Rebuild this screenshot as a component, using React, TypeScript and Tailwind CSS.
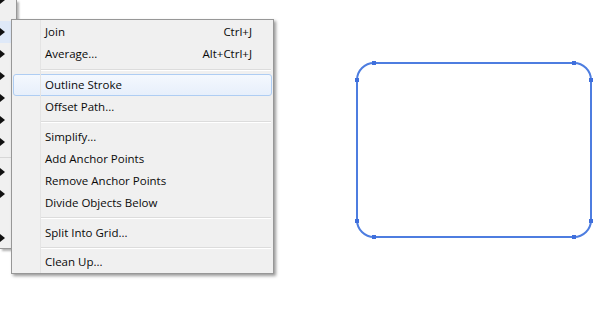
type Item = { label: string; shortcut?: string; active?: boolean };

const groups: { items: Item[]; gap: string }[] = [
  { items: [{ label: "Join", shortcut: "Ctrl+J" }, { label: "Average...", shortcut: "Alt+Ctrl+J" }], gap: "h-[9px]" },
  { items: [{ label: "Outline Stroke", active: true }, { label: "Offset Path..." }], gap: "h-[8px]" },
  {
    items: [
      { label: "Simplify..." },
      { label: "Add Anchor Points" },
      { label: "Remove Anchor Points" },
      { label: "Divide Objects Below" },
    ],
    gap: "h-[8px]",
  },
  { items: [{ label: "Split Into Grid..." }], gap: "h-[7px]" },
  { items: [{ label: "Clean Up..." }], gap: "" },
];

// parent menu rows: true = has submenu arrow, "sep" = separator
const parentRows: (boolean | "sep")[] = [true, true, true, true, true, true, "sep", true, true, false, true];

function Arrow() {
  return (
    <svg width="6" height="8" viewBox="0 0 6 8">
      <polygon points="0,0 5,4 0,8" fill="#111" />
    </svg>
  );
}

function ParentMenu() {
  return (
    <div className="flex h-[249px] w-[17px] flex-col border-r border-b border-[#979797] bg-[#f0f0f0] shadow-[2px_2px_2px_rgba(0,0,0,0.3)]">
      {/* row cut off by the top of the window */}
      <div className="-mt-[4px] h-[25px] shrink-0">
        <Arrow />
      </div>
      {parentRows.map((r, i) =>
        r === "sep" ? (
          <div key={i} className="flex h-[8px] shrink-0 items-center pr-[3px]">
            <div className="h-px w-full bg-[#d7d7d7]" />
          </div>
        ) : (
          <div
            key={i}
            className={i === 0 ? "flex h-[22px] shrink-0 items-center bg-[#dfe9f8]" : "flex h-[22px] shrink-0 items-center"}
          >
            {r && <Arrow />}
          </div>
        )
      )}
    </div>
  );
}

function MenuRow({ item }: { item: Item }) {
  return (
    <div
      className={
        item.active
          ? "mx-px flex h-[22px] items-center justify-between rounded-[3px] border border-[#aecdf3] bg-gradient-to-b from-[#f4f8fe] to-[#e7effb] pl-[31px] pr-[19px]"
          : "mx-px flex h-[22px] items-center justify-between border border-transparent pl-[31px] pr-[19px]"
      }
    >
      <span>{item.label}</span>
      {item.shortcut && <span>{item.shortcut}</span>}
    </div>
  );
}

function Separator({ gap }: { gap: string }) {
  return (
    <div className={`flex flex-col justify-center pl-[28px] pr-[2px] ${gap}`}>
      <div className="h-px bg-[#dcdcdc]" />
      <div className="h-px bg-white" />
    </div>
  );
}

function SubMenu() {
  return (
    <div className="absolute left-[11px] top-[19px] w-[263px] border border-[#979797] bg-[#f0f0f0] pt-px text-[11.5px] text-[#0a0a0a] shadow-[2px_2px_3px_rgba(0,0,0,0.4)]">
      <div className="absolute bottom-0 left-[28px] top-0 w-px bg-[#e4e4e4]" />
      {groups.map((g, i) => (
        <div key={i}>
          {g.items.map((it) => (
            <MenuRow key={it.label} item={it} />
          ))}
          {g.gap && <Separator gap={g.gap} />}
        </div>
      ))}
    </div>
  );
}

function RoundedShape() {
  const anchors = [
    [374, 63],
    [357, 80],
    [574, 63],
    [591, 80],
    [357, 221],
    [374, 237],
    [574, 237],
    [591, 221],
  ];
  return (
    <svg className="absolute left-0 top-0" width="600" height="329">
      <rect x="357" y="63" width="234" height="174" rx="17" fill="none" stroke="#4d7de0" strokeWidth="2" />
      {anchors.map(([x, y]) => (
        <rect key={`${x}-${y}`} x={x - 2} y={y - 2} width="4" height="4" fill="#3f6fdc" />
      ))}
    </svg>
  );
}

export default function App() {
  return (
    <div className="relative h-[329px] w-[600px] overflow-hidden bg-white font-['Open_Sans',sans-serif]">
      <ParentMenu />
      <SubMenu />
      <RoundedShape />
    </div>
  );
}
